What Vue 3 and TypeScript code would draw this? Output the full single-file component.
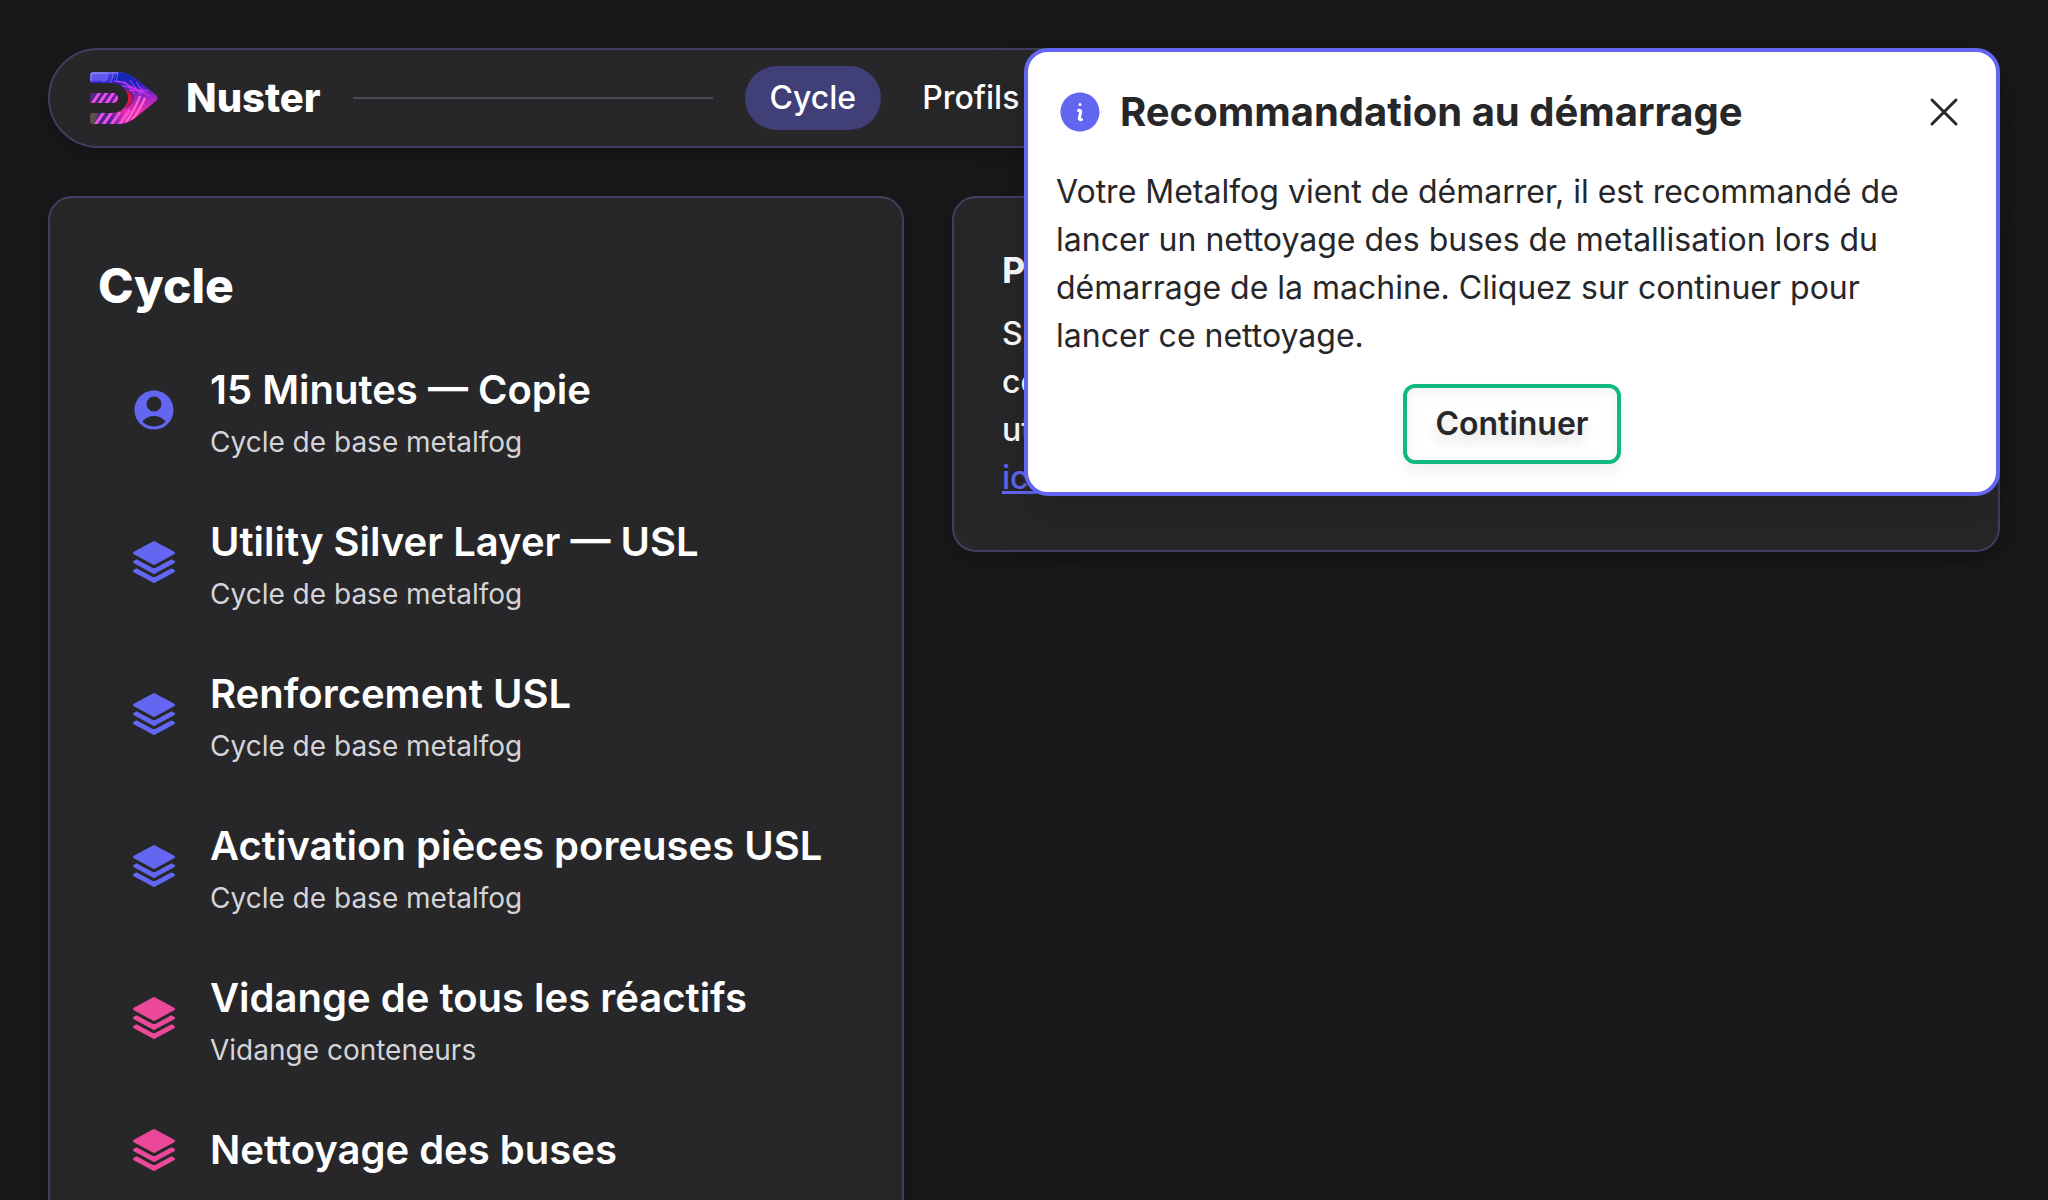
<script setup lang="ts">
import { ref } from 'vue'

type IconName = 'user' | 'stack'

interface CycleProfile {
  name: string
  category?: string
  icon: IconName
  tone: 'indigo' | 'pink'
}

const icons: Record<IconName, string[]> = {
  user: [
    'M18.685 19.097A9.723 9.723 0 0021.75 12c0-5.385-4.365-9.75-9.75-9.75S2.25 6.615 2.25 12a9.723 9.723 0 003.065 7.097A9.716 9.716 0 0012 21.75a9.716 9.716 0 006.685-2.653zm-12.54-1.285A7.486 7.486 0 0112 15a7.486 7.486 0 015.855 2.812A8.224 8.224 0 0112 20.25a8.224 8.224 0 01-5.855-2.438zM15.75 9a3.75 3.75 0 11-7.5 0 3.75 3.75 0 017.5 0z',
  ],
  stack: [
    'M11.644 1.59a.75.75 0 01.712 0l9.75 5.25a.75.75 0 010 1.32l-9.75 5.25a.75.75 0 01-.712 0l-9.75-5.25a.75.75 0 010-1.32l9.75-5.25z',
    'M3.265 10.602l7.668 4.129a2.25 2.25 0 002.134 0l7.668-4.13 1.37.739a.75.75 0 010 1.32l-9.75 5.25a.75.75 0 01-.71 0l-9.75-5.25a.75.75 0 010-1.32l1.37-.738z',
    'M10.933 19.231l-7.668-4.13-1.37.739a.75.75 0 000 1.32l9.75 5.25c.221.12.489.12.71 0l9.75-5.25a.75.75 0 000-1.32l-1.37-.738-7.668 4.13a2.25 2.25 0 01-2.134-.001z',
  ],
}

const profiles: CycleProfile[] = [
  { name: '15 Minutes — Copie', category: 'Cycle de base metalfog', icon: 'user', tone: 'indigo' },
  { name: 'Utility Silver Layer — USL', category: 'Cycle de base metalfog', icon: 'stack', tone: 'indigo' },
  { name: 'Renforcement USL', category: 'Cycle de base metalfog', icon: 'stack', tone: 'indigo' },
  { name: 'Activation pièces poreuses USL', category: 'Cycle de base metalfog', icon: 'stack', tone: 'indigo' },
  { name: 'Vidange de tous les réactifs', category: 'Vidange conteneurs', icon: 'stack', tone: 'pink' },
  { name: 'Nettoyage des buses', icon: 'stack', tone: 'pink' },
]

const showPopup = ref(true)
</script>

<template>
  <div class="app">
    <header class="topbar">
      <svg class="logo" viewBox="0 0 68 52" aria-hidden="true">
        <defs>
          <linearGradient id="logo-fill" x1="0" y1="0" x2="0" y2="1">
            <stop offset="0" stop-color="#4a3fe0" />
            <stop offset="0.25" stop-color="#3a22c8" />
            <stop offset="0.5" stop-color="#a526c4" />
            <stop offset="0.75" stop-color="#ea2aa8" />
            <stop offset="1" stop-color="#d62cae" />
          </linearGradient>
          <linearGradient id="logo-left" x1="0" y1="0" x2="1" y2="0">
            <stop offset="0" stop-color="#4b2a78" />
            <stop offset="0.6" stop-color="#54209c" />
            <stop offset="1" stop-color="#54209c" stop-opacity="0" />
          </linearGradient>
          <clipPath id="logo-clip">
            <path d="M3 0H28C36 0 44 5 50 10L66 23Q69 26 66 29L50 42C44 47 38 52 29 52H3Q0 52 0 49V44Q0 41 3 41H22C29 41 33 38 36 33C39 29 39 23 36 19C33 14 29 11 22 11H3Q0 11 0 8V3Q0 0 3 0Z" />
            <path d="M3 21H23A5 5 0 0 1 23 31H3Q0 31 0 28V24Q0 21 3 21Z" />
          </clipPath>
        </defs>
        <g clip-path="url(#logo-clip)">
          <rect width="68" height="52" fill="url(#logo-fill)" />
          <rect y="20" width="34" height="32" fill="url(#logo-left)" />
          <path d="M28 0C38 0 46 8 52 14L44 15C36 10 30 8 24 8Z" fill="#1426b8" />
          <rect width="18" height="9" rx="3" fill="#6f66f4" opacity="0.7" />
          <path d="M18 0q0 8-5 10M23 0q0 7-3 11M28 0q0 5-2 9" fill="none" stroke="#5a6bff" stroke-width="1" />
          <path d="M25 9Q36 9 52 22M28 14Q40 13 60 24M36 19Q46 17 58 19M40 8L50 22M46 10L55 22M34 9L44 21" fill="none" stroke="#e03bf0" stroke-width="1" />
          <path d="M2 32L10 20M9 32L17 20M16 32L24 20M23 32L31 20M5 53L14 40M13 53L22 40M21 53L30 40M29 53L40 38" stroke="#f052de" stroke-width="3" />
          <path d="M36 50Q44 40 50 24M42 48Q50 38 55 26" fill="none" stroke="#ff6ad2" stroke-width="2" />
          <path d="M36 17Q49 26 36 35Z" fill="#d81450" />
          <path d="M36 17Q51 26 36 36" fill="none" stroke="#4a1d3c" stroke-width="1" />
          <path d="M0 41H8L4 52H0Z" fill="#5a5348" />
          <path d="M1 10V3Q1 1 3 1H28" fill="none" stroke="#c5c0ff" stroke-width="1" opacity="0.6" />
        </g>
      </svg>
      <span class="brand">Nuster</span>
      <span class="rule"></span>
      <nav class="nav">
        <a class="nav-link active" href="#cycle" aria-current="page">Cycle</a>
        <a class="nav-link" href="#profils">Profils</a>
      </nav>
    </header>

    <main class="columns">
      <section class="card">
        <h1 class="card-title">Cycle</h1>
        <ul class="profiles">
          <li v-for="profile in profiles" :key="profile.name">
            <button type="button" class="profile">
              <svg class="icon" :class="profile.tone" viewBox="0 0 24 24" fill="currentColor" aria-hidden="true">
                <path v-for="d in icons[profile.icon]" :key="d" :d="d" fill-rule="evenodd" />
              </svg>
              <span class="profile-text">
                <span class="profile-name">{{ profile.name }}</span>
                <span v-if="profile.category" class="profile-category">{{ profile.category }}</span>
              </span>
            </button>
          </li>
        </ul>
      </section>

      <section class="card">
        <h2 class="help-title">Préparer un cycle</h2>
        <p class="help-text">
          Sélectionnez un cycle dans la liste.<br />
          consultez ensuite ses réglages.<br />
          utilisez la documentation disponible<br />
          <a href="#aide">ici</a>
        </p>
      </section>
    </main>

    <div v-if="showPopup" class="popup" role="dialog" aria-labelledby="popup-title">
      <div class="popup-head">
        <svg class="icon indigo" viewBox="0 0 24 24" fill="currentColor" aria-hidden="true">
          <path fill-rule="evenodd" d="M2.25 12c0-5.385 4.365-9.75 9.75-9.75s9.75 4.365 9.75 9.75-4.365 9.75-9.75 9.75S2.25 17.385 2.25 12zm8.706-1.442c1.146-.573 2.437.463 2.126 1.706l-.709 2.836.042-.02a.75.75 0 01.67 1.34l-.04.022c-1.147.573-2.438-.463-2.127-1.706l.71-2.836-.042.02a.75.75 0 11-.671-1.34l.041-.022zM12 9a.75.75 0 100-1.5.75.75 0 000 1.5z" />
        </svg>
        <h2 id="popup-title" class="popup-title">Recommandation au démarrage</h2>
        <button type="button" class="close" aria-label="Fermer" @click="showPopup = false">
          <svg class="icon" viewBox="0 0 24 24" fill="none" stroke="currentColor" stroke-width="1.5" stroke-linecap="round" aria-hidden="true">
            <path d="M6 18L18 6M6 6l12 12" />
          </svg>
        </button>
      </div>
      <p class="popup-text">
        Votre Metalfog vient de démarrer, il est recommandé de lancer un nettoyage des buses de
        metallisation lors du démarrage de la machine. Cliquez sur continuer pour lancer ce nettoyage.
      </p>
      <button type="button" class="continue" @click="showPopup = false">Continuer</button>
    </div>
  </div>
</template>

<style>
body {
  background: #18181b;
}
</style>

<style scoped>
.app {
  position: relative;
  padding: 48px;
  color: #fff;
  font-family: Inter, 'Liberation Sans', sans-serif;
  font-size: 32px;
  line-height: 48px;
}

.app * {
  box-sizing: border-box;
}

h1,
h2,
p,
ul {
  margin: 0;
  padding: 0;
}

button {
  border: 0;
  padding: 0;
  background: none;
  color: inherit;
  font: inherit;
  cursor: pointer;
}

.topbar {
  display: flex;
  align-items: center;
  gap: 32px;
  height: 100px;
  padding: 0 38px 0 40px;
  border: 2px solid #3f3f5f;
  border-radius: 50px;
  background: #27272a;
  box-shadow: 0 8px 16px rgba(0, 0, 0, 0.2);
}

.logo {
  flex: none;
  width: 68px;
  height: 52px;
}

.brand {
  margin-left: -4px;
  font-size: 40px;
  font-weight: 800;
}

.rule {
  flex: 1;
  height: 2px;
  background: #4b4b52;
}

.nav {
  display: flex;
  flex: 0 0 65%;
  gap: 16px;
}

.nav-link {
  padding: 8px 25px;
  border-radius: 32px;
  color: #fff;
  font-weight: 500;
  text-decoration: none;
}

.nav-link.active {
  background: #403f78;
}

.columns {
  display: grid;
  grid-template-columns: minmax(0, 107fr) minmax(0, 131fr);
  align-items: start;
  gap: 48px;
  margin-top: 48px;
}

.card {
  padding: 48px;
  border: 2px solid #3f3f5f;
  border-radius: 24px;
  background: #27272a;
  box-shadow: 0 8px 16px rgba(0, 0, 0, 0.2);
}

.card-title {
  font-size: 48px;
  font-weight: 800;
  line-height: 80px;
}

.profiles {
  display: flex;
  flex-direction: column;
  gap: 8px;
  margin-top: 12px;
  list-style: none;
}

.profile {
  display: flex;
  align-items: center;
  gap: 32px;
  width: 100%;
  padding: 20px 32px;
  text-align: left;
}

.icon {
  display: block;
  flex: none;
  width: 48px;
  height: 48px;
}

.indigo {
  color: #6366f1;
}

.pink {
  color: #ec4899;
}

.profile-text {
  display: flex;
  flex-direction: column;
  white-space: nowrap;
}

.profile-name {
  font-size: 40px;
  font-weight: 600;
  line-height: 64px;
}

.profile-category {
  color: #d4d4d8;
  font-size: 28px;
  line-height: 40px;
}

.help-title {
  margin-bottom: 16px;
  font-size: 36px;
  font-weight: 700;
  line-height: 48px;
}

.help-text {
  font-weight: 500;
}

.help-text a {
  color: #6366f1;
}

.popup {
  position: absolute;
  top: 48px;
  right: 48px;
  display: flex;
  flex-direction: column;
  gap: 24px;
  width: calc(50% - 48px);
  padding: 28px;
  border: 4px solid #6366f1;
  border-radius: 24px;
  background: #fff;
  color: #27272a;
  box-shadow: 0 24px 48px rgba(0, 0, 0, 0.15);
}

.popup-head {
  display: flex;
  align-items: center;
  gap: 16px;
  height: 64px;
}

.popup-title {
  flex: 1;
  font-size: 40px;
  font-weight: 700;
}

.popup-text {
  padding-right: 32px;
}

.continue {
  align-self: center;
  height: 80px;
  padding: 0 28px;
  border: 4px solid #10b981;
  border-radius: 12px;
  font-weight: 600;
  text-shadow: 0 8px 12px rgba(0, 0, 0, 0.15);
  box-shadow: 0 8px 16px rgba(0, 0, 0, 0.06), inset 0 4px 16px rgba(0, 0, 0, 0.05);
}
</style>
